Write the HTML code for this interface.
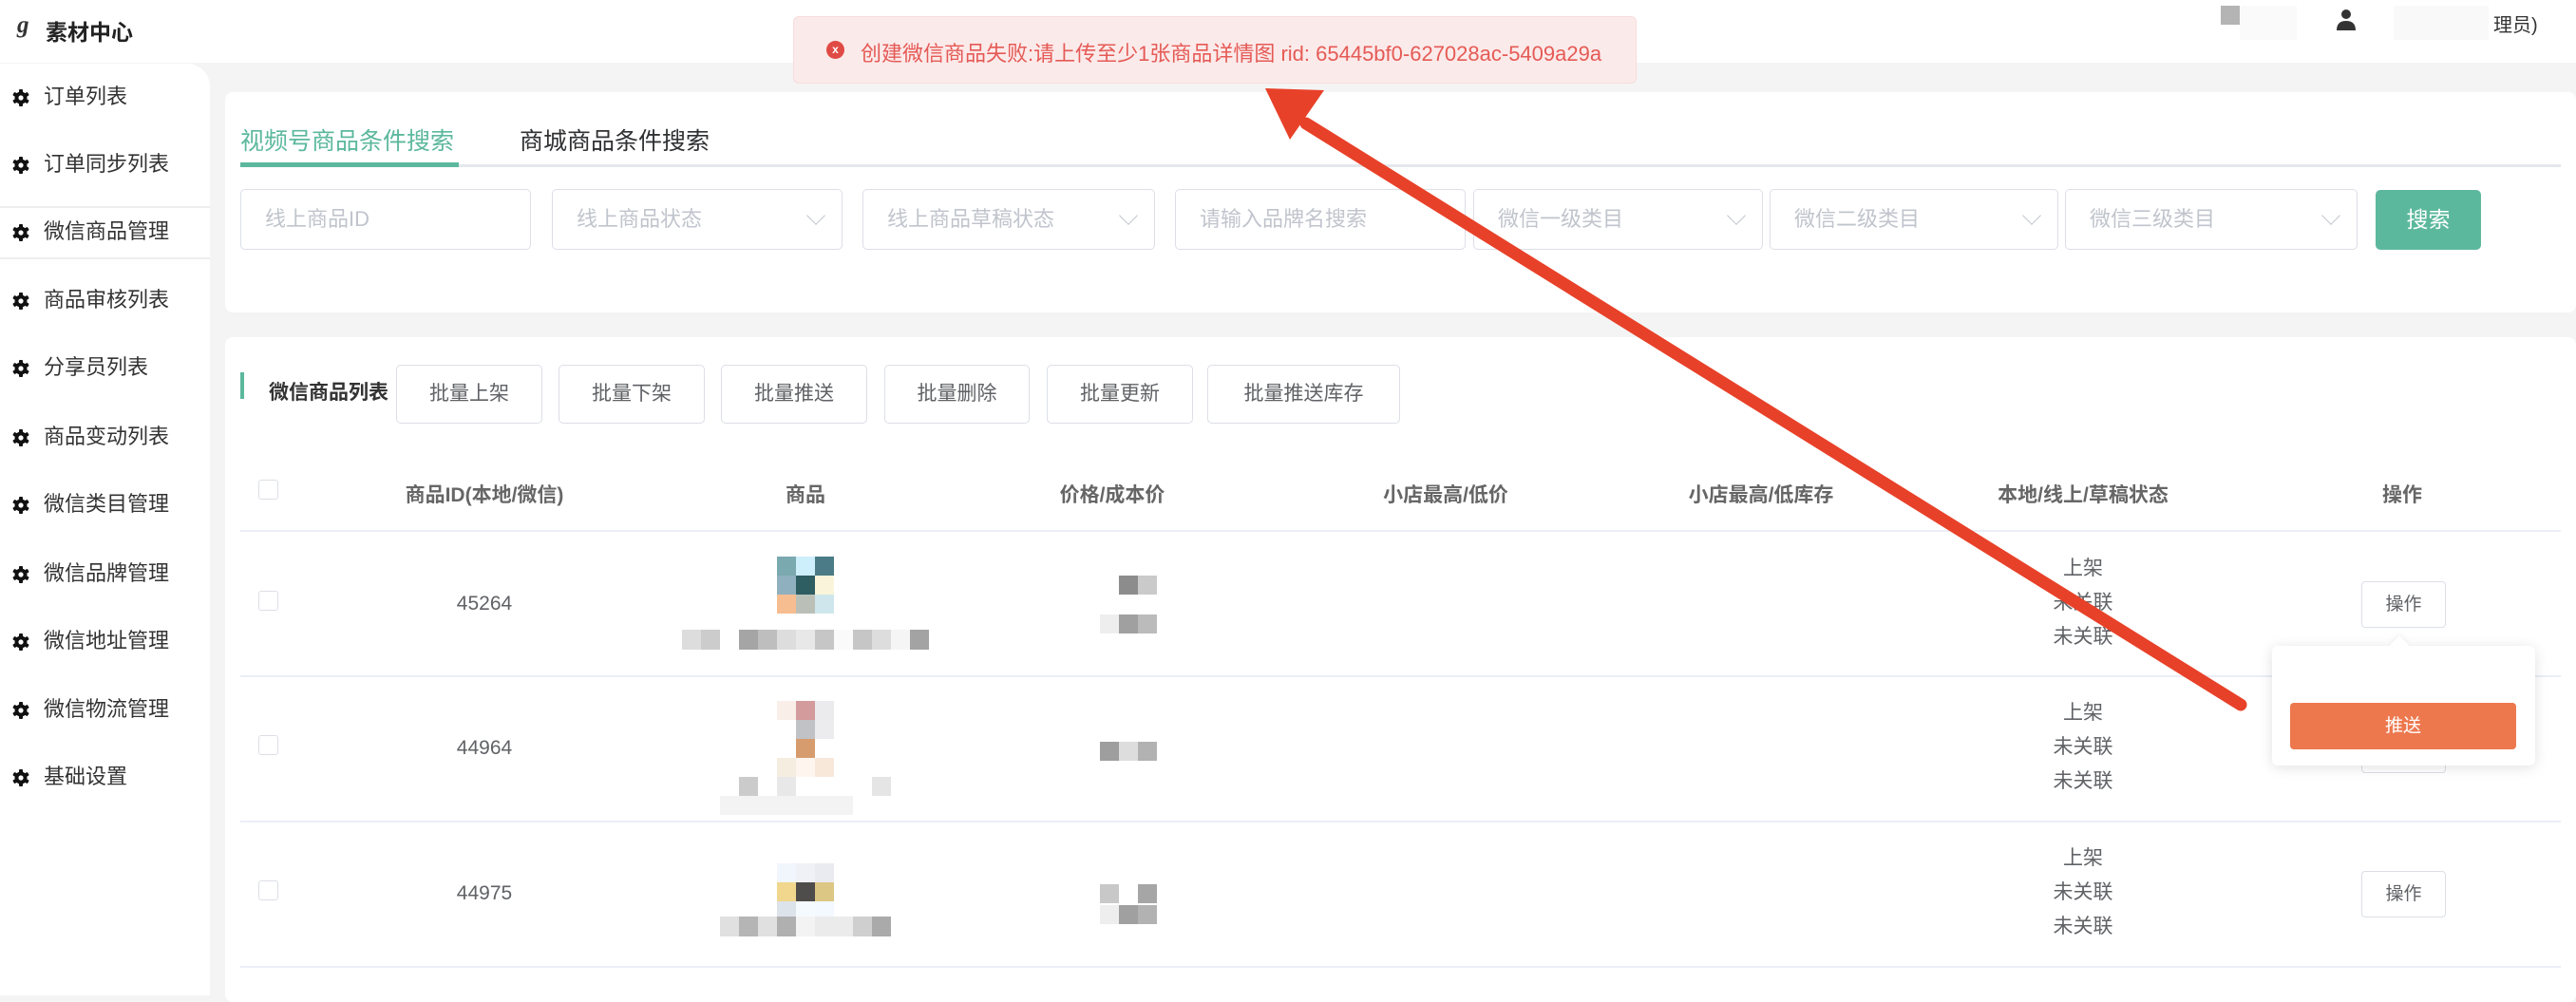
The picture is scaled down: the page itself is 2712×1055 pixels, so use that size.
<!DOCTYPE html>
<html><head><meta charset="utf-8"><style>
*{margin:0;padding:0;box-sizing:border-box}
body{width:2712px;height:1048px;overflow:hidden;background:#f4f4f4;font-family:"Liberation Sans","Noto Sans CJK SC",sans-serif;position:relative;color:#606266}
.a{position:absolute}
.hdr{left:0;top:0;width:2712px;height:66px;background:#fff}
.side{left:0;top:67px;width:221px;height:981px;background:#fff;border-top-right-radius:24px}
.si{position:absolute;left:12px;font-size:22px;color:#333;height:30px;line-height:30px;white-space:nowrap}
.si svg{position:absolute;left:0;top:6px}
.si span{position:absolute;left:34px}
.card{background:#fff;border-radius:8px}
.inp{position:absolute;top:199px;height:64px;border:1px solid #dcdfe6;border-radius:5px;background:#fff;font-size:22px;color:#c0c4cc;line-height:62px;padding-left:25px}
.inp i{position:absolute;right:20px;top:20px;width:14px;height:14px;border-right:1.5px solid #c0c4cc;border-bottom:1.5px solid #c0c4cc;transform:rotate(45deg)}
.btn{position:absolute;top:384px;height:62px;border:1px solid #dcdfe6;border-radius:5px;background:#fff;font-size:21px;color:#606266;line-height:60px;text-align:center}
.th{position:absolute;top:505px;font-size:21px;color:#666;font-weight:bold;transform:translateX(-50%);white-space:nowrap}
.td{position:absolute;font-size:21px;color:#606266;transform:translateX(-50%);white-space:nowrap;line-height:28px}
.st{position:absolute;font-size:21px;color:#606266;width:200px;text-align:center;line-height:36px}
.ln{position:absolute;left:253px;width:2443px;height:2px;background:#ebeef5}
.cb{position:absolute;left:272px;width:21px;height:21px;border:1px solid #dcdfe6;border-radius:3px;background:#fff}
.op{position:absolute;left:2486px;width:89px;height:49px;border:1px solid #dcdfe6;border-radius:4px;background:#fff;font-size:19px;color:#606266;text-align:center;line-height:47px}
.p{position:absolute;width:20px;height:20px}
</style></head><body>
<div class="a hdr"></div>
<div class="a" style="left:18px;top:13px;font-size:25px;color:#333;font-style:italic;font-weight:bold;font-family:'Liberation Serif',serif">g</div>
<div class="a" style="left:48px;top:15px;font-size:23px;color:#222;font-weight:bold">素材中心</div>
<div class="a" style="left:2338px;top:6px;width:20px;height:20px;background:#b4b4b4"></div>
<div class="a" style="left:2358px;top:6px;width:60px;height:36px;background:#fafafa"></div>
<svg class="a" style="left:2459px;top:9px" width="22" height="24" viewBox="0 0 22 24"><circle cx="11" cy="6" r="5" fill="#333"/><path d="M1 23 Q1 13 11 13 Q21 13 21 23 Z" fill="#333"/></svg>
<div class="a" style="left:2520px;top:6px;width:100px;height:36px;background:#f9f9f9"></div>
<div class="a" style="left:2625px;top:10px;font-size:20px;color:#333">理员)</div>

<div class="a side"></div>
<div class="a" style="left:0;top:217px;width:221px;height:2px;background:#eee"></div>
<div class="a" style="left:0;top:271px;width:221px;height:2px;background:#eee"></div>
<div id="sb"></div>

<div class="a card" style="left:237px;top:97px;width:2475px;height:232px"></div>
<div class="a" style="left:253px;top:129px;font-size:25px;color:#5cb89d">视频号商品条件搜索</div>
<div class="a" style="left:547px;top:129px;font-size:25px;color:#303133">商城商品条件搜索</div>
<div class="a" style="left:253px;top:173px;width:2443px;height:3px;background:#e4e7ed"></div>
<div class="a" style="left:253px;top:171px;width:230px;height:5px;background:#5cb89d"></div>
<div class="inp" style="left:253px;width:306px">线上商品ID</div>
<div class="inp" style="left:581px;width:306px">线上商品状态<i></i></div>
<div class="inp" style="left:908px;width:308px">线上商品草稿状态<i></i></div>
<div class="inp" style="left:1237px;width:306px">请输入品牌名搜索</div>
<div class="inp" style="left:1551px;width:305px">微信一级类目<i></i></div>
<div class="inp" style="left:1863px;width:304px">微信二级类目<i></i></div>
<div class="inp" style="left:2174px;width:308px">微信三级类目<i></i></div>
<div class="a" style="left:2501px;top:200px;width:111px;height:63px;background:#5cb89d;border-radius:5px;color:#fff;font-size:23px;text-align:center;line-height:63px">搜索</div>

<div class="a card" style="left:237px;top:355px;width:2475px;height:700px"></div>
<div class="a" style="left:253px;top:392px;width:4px;height:28px;background:#5cb89d"></div>
<div class="a" style="left:283px;top:397px;font-size:21px;color:#333;font-weight:bold">微信商品列表</div>
<div class="btn" style="left:417px;width:154px">批量上架</div>
<div class="btn" style="left:588px;width:154px">批量下架</div>
<div class="btn" style="left:759px;width:154px">批量推送</div>
<div class="btn" style="left:931px;width:153px">批量删除</div>
<div class="btn" style="left:1102px;width:154px">批量更新</div>
<div class="btn" style="left:1271px;width:203px">批量推送库存</div>

<div class="cb" style="top:505px"></div>
<div class="th" style="left:510px">商品ID(本地/微信)</div>
<div class="th" style="left:848px">商品</div>
<div class="th" style="left:1171px">价格/成本价</div>
<div class="th" style="left:1522px">小店最高/低价</div>
<div class="th" style="left:1854px">小店最高/低库存</div>
<div class="th" style="left:2193px">本地/线上/草稿状态</div>
<div class="th" style="left:2529px">操作</div>
<div class="ln" style="top:558px"></div>
<div class="ln" style="top:711px"></div>
<div class="ln" style="top:864px"></div>
<div class="ln" style="top:1017px"></div>

<div class="cb" style="top:622px"></div><div class="cb" style="top:774px"></div><div class="cb" style="top:927px"></div>
<div class="td" style="left:510px;top:622px">45264</div>
<div class="td" style="left:510px;top:774px">44964</div>
<div class="td" style="left:510px;top:927px">44975</div>
<div class="st" style="left:2093px;top:581px">上架<br>未关联<br>未关联</div>
<div class="st" style="left:2093px;top:733px">上架<br>未关联<br>未关联</div>
<div class="st" style="left:2093px;top:886px">上架<br>未关联<br>未关联</div>
<div class="op" style="top:612px">操作</div>
<div class="op" style="top:765px">操作</div>
<div class="op" style="top:917px">操作</div>

<div class="p" style="left:818px;top:586px;background:#7aa9b0"></div><div class="p" style="left:838px;top:586px;background:#cdeefb"></div><div class="p" style="left:858px;top:586px;background:#4a7b86"></div>
<div class="p" style="left:818px;top:606px;background:#8fb1bf"></div><div class="p" style="left:838px;top:606px;background:#2e5d62"></div><div class="p" style="left:858px;top:606px;background:#faf5da"></div>
<div class="p" style="left:818px;top:626px;background:#f6bd91"></div><div class="p" style="left:838px;top:626px;background:#bac0b8"></div><div class="p" style="left:858px;top:626px;background:#cfe7ec"></div>
<div class="a" style="left:718px;top:663px;width:260px;height:21px;background:linear-gradient(90deg,#ddd 0 20px,#ccc 20px 40px,#fff 40px 60px,#a5a5a5 60px 80px,#bebebe 80px 100px,#ddd 100px 120px,#e8e8e8 120px 140px,#c6c6c6 140px 160px,#fafafa 160px 180px,#c6c6c6 180px 200px,#ddd 200px 220px,#f5f5f5 220px 240px,#a3a3a3 240px 260px)"></div>
<div class="p" style="left:818px;top:738px;background:#f9efe8"></div><div class="p" style="left:838px;top:738px;background:#d39b9b"></div><div class="p" style="left:858px;top:738px;background:#ebebee"></div>
<div class="p" style="left:838px;top:758px;background:#c0c2c6"></div><div class="p" style="left:858px;top:758px;background:#ececee"></div>
<div class="p" style="left:838px;top:778px;background:#d69c6e"></div>
<div class="p" style="left:818px;top:798px;background:#f5ede0"></div><div class="p" style="left:838px;top:798px;background:#fff5ef"></div><div class="p" style="left:858px;top:798px;background:#f7e8da"></div>
<div class="p" style="left:778px;top:818px;background:#cbcbcb"></div><div class="p" style="left:818px;top:818px;background:#e8e8e8"></div><div class="p" style="left:918px;top:818px;background:#e5e5e5"></div>
<div class="a" style="left:758px;top:838px;width:140px;height:20px;background:#f3f3f3"></div>
<div class="p" style="left:818px;top:909px;background:#f1f5fc"></div><div class="p" style="left:838px;top:909px;background:#eff1f6"></div><div class="p" style="left:858px;top:909px;background:#e9ebf1"></div>
<div class="p" style="left:818px;top:929px;background:#f0d78d"></div><div class="p" style="left:838px;top:929px;background:#4f4d4b"></div><div class="p" style="left:858px;top:929px;background:#dcc785"></div>
<div class="p" style="left:818px;top:949px;background:#dde3eb"></div><div class="p" style="left:838px;top:949px;background:#f5faff"></div><div class="p" style="left:858px;top:949px;background:#f3f9ff"></div>
<div class="a" style="left:758px;top:965px;width:180px;height:21px;background:linear-gradient(90deg,#e0e0e0 0 20px,#b5b5b5 20px 40px,#e0e0e0 40px 60px,#b0b0b0 60px 80px,#f3f3f3 80px 100px,#ebebeb 100px 140px,#cfcfcf 140px 160px,#aaa 160px 180px)"></div>
<div class="p" style="left:1178px;top:606px;background:#8c8c8c"></div><div class="p" style="left:1198px;top:606px;background:#cacaca"></div>
<div class="p" style="left:1158px;top:647px;background:#eee"></div><div class="p" style="left:1178px;top:647px;background:#a0a0a0"></div><div class="p" style="left:1198px;top:647px;background:#bbb"></div>
<div class="p" style="left:1158px;top:781px;background:#9e9e9e"></div><div class="p" style="left:1178px;top:781px;background:#ddd"></div><div class="p" style="left:1198px;top:781px;background:#b2b2b2"></div>
<div class="p" style="left:1158px;top:931px;background:#c8c8c8"></div><div class="p" style="left:1198px;top:931px;background:#a6a6a6"></div>
<div class="p" style="left:1158px;top:953px;background:#eee"></div><div class="p" style="left:1178px;top:953px;background:#a0a0a0"></div><div class="p" style="left:1198px;top:953px;background:#b2b2b2"></div>

<div class="a" style="left:2392px;top:680px;width:277px;height:126px;background:#fff;border-radius:6px;box-shadow:0 2px 14px rgba(0,0,0,.12)"></div>
<div class="a" style="left:2519px;top:672px;width:14px;height:14px;background:#fff;transform:rotate(45deg);box-shadow:-2px -2px 4px rgba(0,0,0,.04)"></div>
<div class="a" style="left:2411px;top:740px;width:238px;height:49px;background:#ed784e;border-radius:4px;color:#fff;font-size:19px;text-align:center;line-height:49px">推送</div>

<div class="a" style="left:835px;top:17px;width:888px;height:71px;background:#fbeaea;border:1px solid #f8dcdc;border-radius:6px"></div>
<div class="a" style="left:870px;top:43px;width:19px;height:19px;border-radius:50%;background:#e04a44;color:#fff;font-size:12px;font-weight:bold;text-align:center;line-height:19px">x</div>
<div class="a" style="left:906px;top:39px;font-size:22px;color:#e55a55;white-space:nowrap">创建微信商品失败:请上传至少1张商品详情图 rid: 65445bf0-627028ac-5409a29a</div>

<svg class="a" style="left:0;top:0" width="2712" height="1048">
<line x1="2359" y1="742" x2="1375" y2="130" stroke="#e84129" stroke-width="13" stroke-linecap="round"/>
<polygon points="1332,93 1394,95 1358,147" fill="#e84129"/>
</svg>

<script>
var n=["订单列表","订单同步列表","微信商品管理","商品审核列表","分享员列表","商品变动列表","微信类目管理","微信品牌管理","微信地址管理","微信物流管理","基础设置"];
var ys=[102,173,244,316,387,460,531,604,675,747,818],h="";
var g='<svg width="20" height="20" viewBox="0 0 20 20"><g fill="#111"><circle cx="10" cy="10" r="6.5"/><rect x="8" y="1" width="4" height="18" rx="1"/><rect x="8" y="1" width="4" height="18" rx="1" transform="rotate(60 10 10)"/><rect x="8" y="1" width="4" height="18" rx="1" transform="rotate(120 10 10)"/></g><circle cx="10" cy="10" r="2.6" fill="#fff"/></svg>';
for(var i=0;i<n.length;i++)h+='<div class="si" style="top:'+(ys[i]-15)+'px">'+g+'<span>'+n[i]+'</span></div>';
document.getElementById("sb").innerHTML=h;
</script>
</body></html>
